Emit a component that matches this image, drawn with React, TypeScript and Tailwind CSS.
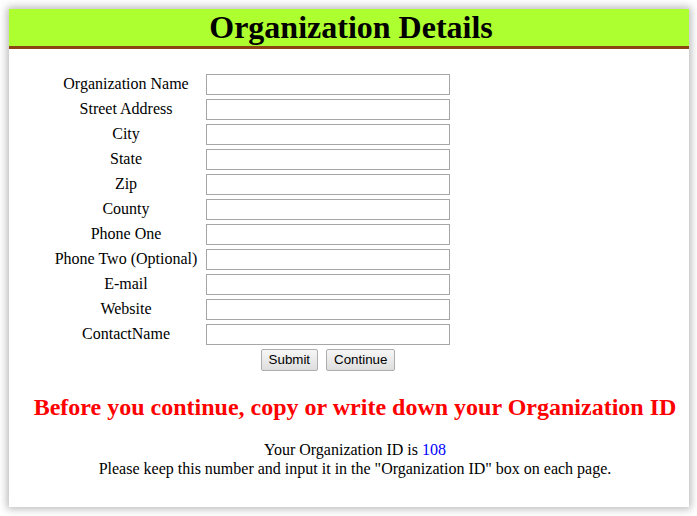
import React from 'react';

const fields = [
  'Organization Name',
  'Street Address',
  'City',
  'State',
  'Zip',
  'County',
  'Phone One',
  'Phone Two (Optional)',
  'E-mail',
  'Website',
  'ContactName',
];

const buttonClass =
  "h-[22px] px-[7px] border border-[#adadad] rounded-[2px] bg-gradient-to-b from-[#f6f6f6] to-[#dedede] text-[13.33px] text-black font-['Liberation_Sans',Arial,sans-serif] leading-none";

export default function App() {
  return (
    <div className="min-h-[516px] bg-white pt-[9px] pl-[9px] font-['Liberation_Serif','Times_New_Roman',serif] text-black">
      <div className="w-[680px] h-[498px] bg-white shadow-[0_0_8px_2px_rgba(0,0,0,0.28)]">
        {/* Header */}
        <div className="h-[40px] bg-[#adff2f] border-b-[3px] border-[#8b4513] text-center">
          <h1 className="pl-[4px] text-[32px] font-bold leading-[37px]">Organization Details</h1>
        </div>

        {/* Form */}
        <div className="ml-[43px] mt-[25px] grid grid-cols-[148px_244px] gap-x-[6px] gap-y-[4px] items-center">
          {fields.map((label) => (
            <React.Fragment key={label}>
              <div className="pb-[2px] text-center text-[16px] leading-[19px] whitespace-nowrap">{label}</div>
              <input
                type="text"
                className="h-[21px] w-[244px] border border-[#a6a6a6] bg-white outline-none"
              />
            </React.Fragment>
          ))}
          <div />
          <div className="flex justify-center gap-[8px]">
            <button className={buttonClass}>Submit</button>
            <button className={buttonClass}>Continue</button>
          </div>
        </div>

        {/* Notice */}
        <div className="pl-[12px] text-center">
          <h2 className="mt-[22px] text-[24px] font-bold leading-[28px] text-[#ff0000] whitespace-nowrap">
            Before you continue, copy or write down your Organization ID
          </h2>
          <p className="mt-[19px] text-[16px] leading-[19px]">
            Your Organization ID is <span className="text-[#0000ff]">108</span>
          </p>
          <p className="text-[16px] leading-[19px]">
            Please keep this number and input it in the "Organization ID" box on each page.
          </p>
        </div>
      </div>
    </div>
  );
}
